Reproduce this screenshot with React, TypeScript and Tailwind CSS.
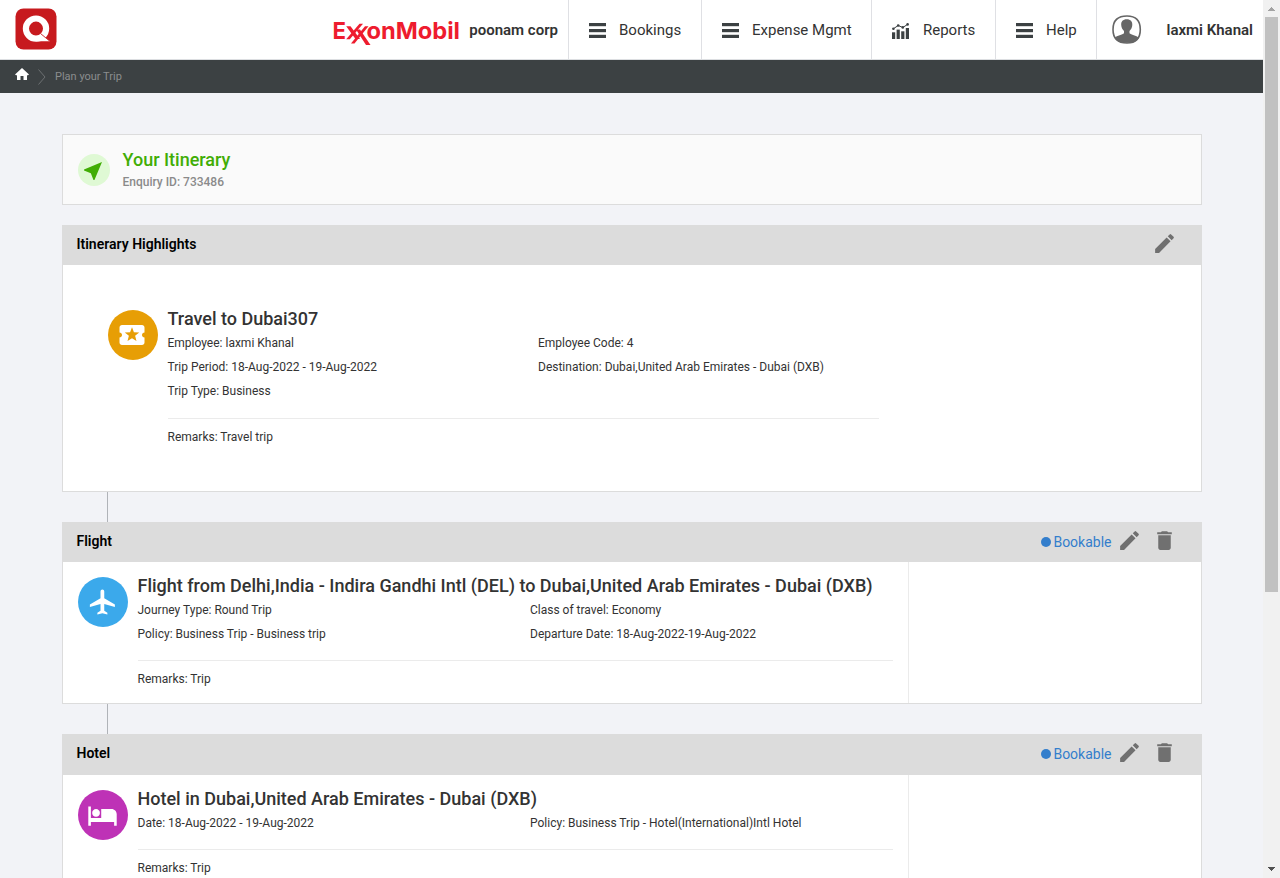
import React from "react";
import { MdDelete, MdEdit, MdHotel, MdLocalActivity, MdNearMe } from "react-icons/md";

function Bars() {
  return (
    <svg width="17" height="16" viewBox="0 0 17 16" fill="#3c4143" className="mt-[3px] shrink-0">
      <rect y="0" width="17" height="3.2" />
      <rect y="6" width="17" height="3.2" />
      <rect y="11.8" width="17" height="3.2" />
    </svg>
  );
}

function ChartIcon() {
  return (
    <svg width="18" height="16" viewBox="0 0 18 16" fill="#3c4143" className="mt-[3px] shrink-0">
      <rect x="0" y="9.3" width="3.2" height="6.7" />
      <rect x="4.6" y="6.6" width="3.2" height="9.4" />
      <rect x="9.2" y="8.3" width="3.2" height="7.7" />
      <rect x="13.8" y="5" width="3.2" height="11" />
      <path d="M1.3 5.800 6.200 2.500 10.800 4.500 15.700 1.300" fill="none" stroke="#3c4143" strokeWidth="1" />
      <circle cx="1.4" cy="5.8" r="1.3" />
      <circle cx="6.2" cy="2.5" r="1.3" />
      <circle cx="10.8" cy="4.4" r="1.3" />
      <circle cx="15.6" cy="1.4" r="1.3" />
    </svg>
  );
}

function NavItem({ icon, label, className }: { icon: React.ReactNode; label: string; className: string }) {
  return (
    <div className={`flex h-full shrink-0 items-center gap-[13px] border-l border-[#dfe0e4] pl-5 ${className}`}>
      {icon}
      <span className="mt-px">{label}</span>
    </div>
  );
}

function Logo() {
  return (
    <svg width="42" height="42" viewBox="0 0 42 42" className="-mt-[2px] shrink-0">
      <rect x="0.5" y="0.5" width="41" height="41" rx="8" fill="#c71a1e" />
      <circle cx="21" cy="20.6" r="10.1" fill="none" stroke="#fff" strokeWidth="6.2" />
      <path d="M26 25 34.800 33.300 21 33.300 24 30z" fill="#fff" />
      <path d="M25.500 25.500 34 32.500" stroke="#c71a1e" strokeWidth="0.9" />
    </svg>
  );
}

function Avatar() {
  return (
    <svg width="30" height="30" viewBox="0 0 30 30" className="ml-[15px] shrink-0">
      <path
        d="M15 1C24 1 28.300 5 28.300 14.500S24 28 15 28 1 24 1 14.500 6 1 15 1z"
        fill="#fff"
        stroke="#666"
        strokeWidth="1.6"
      />
      <path
        d="M14.700 4.300c3.900 0 5.800 2.300 5.600 5.600-.1 2.500-1.300 4.500-2.800 6v2.300c1.500 1.700 6.800 2 9.500 4.600-2.200 4-6.300 5-12.200 5S4.800 26.800 2.500 22.800c2.700-2.600 8-2.900 9.500-4.600v-2.300c-1.500-1.500-2.700-3.500-2.800-6-.2-3.300 1.700-5.600 5.500-5.600z"
        fill="#666"
      />
    </svg>
  );
}

function CompanyLogo() {
  return (
    <svg width="127" height="32" viewBox="0 0 127 32" className="mr-[9px] shrink-0 overflow-visible" fill="#ee1c2e">
      <g fontFamily="Inter, sans-serif" fontWeight="700" fontSize="23.5">
        <text x="-0.5" y="25" textLength="13.5" lengthAdjust="spacingAndGlyphs">E</text>
        <text x="33.5" y="25" textLength="93.5" lengthAdjust="spacingAndGlyphs">onMobil</text>
      </g>
      <path d="M13.200 12.200h4.300L27 25h-4.500z" />
      <path d="M13.200 25.300h3.600L30 9.700h-3.500z" />
      <path d="M18 29.500h3.500L35.500 12.200H32z" />
      <path d="M23 15.500h4L37.500 31H33z" />
    </svg>
  );
}

function Header() {
  return (
    <header className="flex h-[60px] items-center border-b border-[#dcdee1] bg-white pl-[15px] text-[15px] text-[#333]">
      <Logo />
      <div className="ml-auto flex h-full items-center">
        <CompanyLogo />
        <span className="mt-px mr-[10px] font-semibold">poonam corp</span>
        <NavItem className="w-[133px]" icon={<Bars />} label="Bookings" />
        <NavItem className="w-[170px]" icon={<Bars />} label="Expense Mgmt" />
        <NavItem className="w-[124px]" icon={<ChartIcon />} label="Reports" />
        <NavItem className="w-[101px]" icon={<Bars />} label="Help" />
        <div className="flex h-full w-[167px] shrink-0 items-center border-l border-[#dfe0e4]">
          <Avatar />
          <span className="mt-px ml-[24.500px] font-semibold whitespace-nowrap">laxmi Khanal</span>
        </div>
      </div>
    </header>
  );
}

function Breadcrumb() {
  return (
    <nav className="flex h-[33px] items-center bg-[#3c4143] pl-[15px] text-[11px] text-[#8b8d8e]">
      <svg width="14" height="13" viewBox="0 0 14 13" fill="#fff" className="-mt-1">
        <path d="M7 0 14 6.500 13 7.300H12V12H8.500V8h-3v4H2V7.300H1L0 6.500z" />
      </svg>
      <svg width="8" height="16" viewBox="0 0 8 16" fill="none" stroke="#6c7072" className="mt-px ml-[9px]">
        <path d="M.5.500 7 8 .5 15.500" />
      </svg>
      <span className="mt-px ml-[9px]">Plan your Trip</span>
    </nav>
  );
}

function CardHeader({ title, bookable, className }: { title: string; bookable?: boolean; className: string }) {
  return (
    <div className={`flex items-center bg-[#dcdcdc] pl-[14.500px] pr-[25px] ${className}`}>
      <h2 className="mb-[3px] text-sm font-semibold text-black">{title}</h2>
      <div className="ml-auto flex items-center text-[#707070]">
        {bookable && (
          <span className="mr-[5.500px] flex items-center gap-[2px] text-sm text-[#337ecc]">
            <i className="size-[10px] rounded-full bg-[#337ecc]" />
            Bookable
          </span>
        )}
        <MdEdit size={25} className="mb-[3px]" />
        {bookable && <MdDelete size={25} className="mb-[3px] ml-[10px]" />}
      </div>
    </div>
  );
}

function Details({
  title,
  rows,
  remarks,
  left,
  gap,
}: {
  title: string;
  rows: string[][];
  remarks: string;
  left: string;
  gap: string;
}) {
  return (
    <div className="min-w-0 flex-1 text-xs leading-6 text-[#333]">
      <h3 className="text-lg leading-6 font-medium whitespace-nowrap">{title}</h3>
      {rows.map((row) => (
        <div key={row[0]} className="flex">
          {row.map((cell, i) => (
            <div key={cell} className={i === 0 ? `shrink-0 ${left}` : "whitespace-nowrap"}>
              {cell}
            </div>
          ))}
        </div>
      ))}
      <div className={`border-t border-[#ebebeb] pt-[6px] ${gap}`}>{remarks}</div>
    </div>
  );
}

function Connector() {
  return <div className="ml-[45px] h-[30px] w-px bg-[#b0b3b8]" />;
}

function PlaneIcon() {
  return (
    <svg width="30" height="30" viewBox="0 0 24 24" fill="#fff" className="mr-px mb-px">
      <path d="M21.500 16v-2L13 9V3.500c0-.83-.67-1.500-1.500-1.500S10 2.670 10 3.500V9l-8.500 5v2l8.500-2.500V19l-2.500 1.500V22l4-1 4 1v-1.500L13 19v-5.500l8.500 2.500z" />
    </svg>
  );
}

function Scrollbar() {
  return (
    <div className="flex h-full w-[17px] shrink-0 flex-col items-center bg-[#f1f1f1]">
      <svg width="17" height="17" viewBox="0 0 17 17" fill="#a3a3a3" shapeRendering="crispEdges">
        <path d="M5 11 8.500 7 12 11z" />
      </svg>
      <div className="h-[575px] w-[13px] bg-[#c1c1c1]" />
      <svg width="17" height="17" viewBox="0 0 17 17" fill="#505050" className="mt-auto" shapeRendering="crispEdges">
        <path d="M5 6 8.500 10 12 6z" />
      </svg>
    </div>
  );
}

export default function App() {
  return (
    <div className="flex h-[878px] w-[1280px] overflow-hidden bg-[#f2f3f7] font-['Roboto',sans-serif]">
      <div className="h-full w-[1263px] shrink-0 overflow-hidden">
        <Header />
        <Breadcrumb />
        <main className="mt-[41px] ml-[62px] w-[1140px]">
          <section className="mb-5 flex h-[71px] items-center border border-[#dcdcdc] bg-[#fafafa] pl-[15px]">
            <div className="flex size-8 items-center justify-center rounded-full bg-[#dff9d4]">
              <MdNearMe size={24} color="#41ad05" className="mt-[3px] mr-[3px]" />
            </div>
            <div className="ml-[12.500px]">
              <h1 className="text-lg leading-6 font-medium text-[#41ad05]">Your Itinerary</h1>
              <p className="text-xs leading-5 font-medium text-[#8a8a8a]">Enquiry ID: 733486</p>
            </div>
          </section>

          <section>
            <CardHeader title="Itinerary Highlights" className="h-10" />
            <div className="flex h-[227px] border border-t-0 border-[#dcdcdc] bg-white pt-[42px] pr-[322px] pl-[45px]">
              <div className="mt-[3px] mr-[9.500px] flex size-[50px] shrink-0 items-center justify-center rounded-full bg-[#e79e05]">
                <MdLocalActivity size={30} color="#fff" className="mr-[2px]" />
              </div>
              <Details
                title="Travel to Dubai307"
                left="w-[370.500px]"
                gap="mt-[15px]"
                rows={[
                  ["Employee: laxmi Khanal", "Employee Code: 4"],
                  ["Trip Period: 18-Aug-2022 - 19-Aug-2022", "Destination: Dubai,United Arab Emirates - Dubai (DXB)"],
                  ["Trip Type: Business"],
                ]}
                remarks="Remarks: Travel trip"
              />
            </div>
          </section>
          <Connector />

          <section>
            <CardHeader title="Flight" bookable className="h-10" />
            <div className="flex h-[142px] border border-t-0 border-[#dcdcdc] bg-white pl-[15px]">
              <div className="flex w-[831px] border-r border-[#ebebeb] pt-3 pr-[15px]">
                <div className="mt-[3px] mr-[9.500px] flex size-[50px] shrink-0 items-center justify-center rounded-full bg-[#3ba9eb]">
                  <PlaneIcon />
                </div>
                <Details
                  title="Flight from Delhi,India - Indira Gandhi Intl (DEL) to Dubai,United Arab Emirates - Dubai (DXB)"
                  left="w-[392.500px]"
                  gap="mt-[14px]"
                  rows={[
                    ["Journey Type: Round Trip", "Class of travel: Economy"],
                    ["Policy: Business Trip - Business trip", "Departure Date: 18-Aug-2022-19-Aug-2022"],
                  ]}
                  remarks="Remarks: Trip"
                />
              </div>
            </div>
          </section>
          <Connector />

          <section>
            <CardHeader title="Hotel" bookable className="h-[41px] pb-px" />
            <div className="flex h-[142px] border border-t-0 border-[#dcdcdc] bg-white pl-[15px]">
              <div className="flex w-[831px] border-r border-[#ebebeb] pt-3 pr-[15px]">
                <div className="mt-[3px] mr-[9.500px] flex size-[50px] shrink-0 items-center justify-center rounded-full bg-[#be32b6]">
                  <MdHotel size={31} color="#fff" className="mr-px" />
                </div>
                <Details
                  title="Hotel in Dubai,United Arab Emirates - Dubai (DXB)"
                  left="w-[392.500px]"
                  gap="mt-[14px]"
                  rows={[["Date: 18-Aug-2022 - 19-Aug-2022", "Policy: Business Trip - Hotel(International)Intl Hotel"]]}
                  remarks="Remarks: Trip"
                />
              </div>
            </div>
          </section>
        </main>
      </div>
      <Scrollbar />
    </div>
  );
}
